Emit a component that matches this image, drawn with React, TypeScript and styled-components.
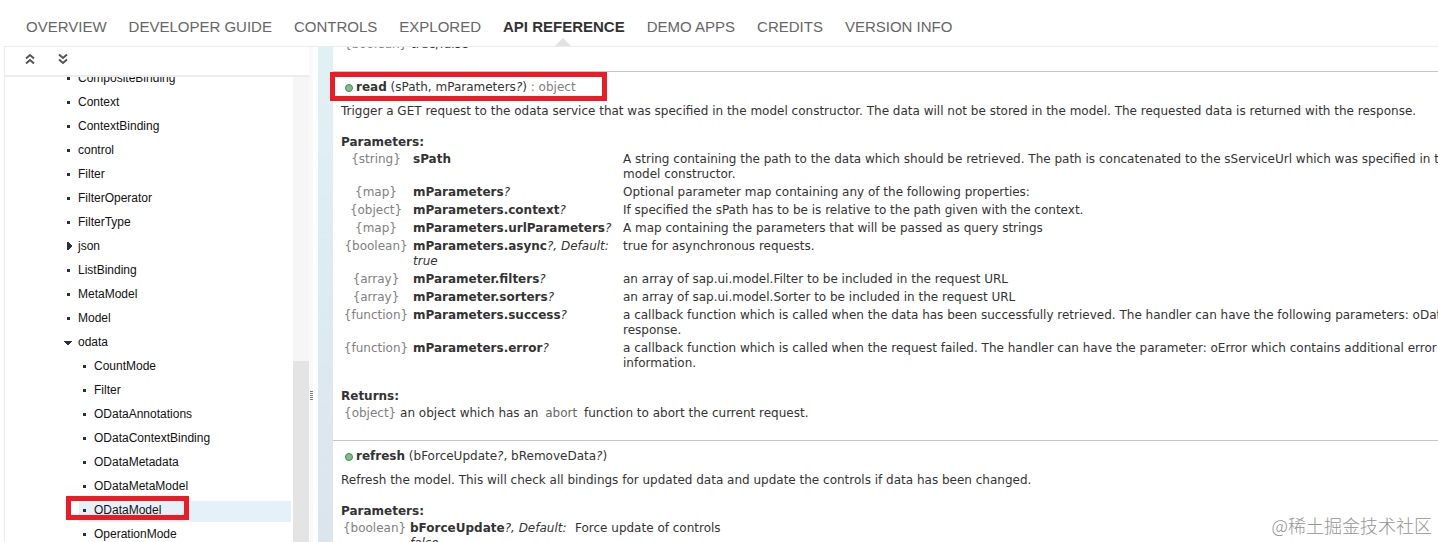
import React from 'react';
import styled, { createGlobalStyle } from 'styled-components';

const Global = createGlobalStyle`
  *, *::before, *::after { box-sizing: border-box; }
  body { margin: 0; background: #fff; }
`;

const ui = '"Liberation Sans", Arial, sans-serif';
const docFont = '"DejaVu Sans", Verdana, sans-serif';

const Shell = styled.div`
  position: relative;
  display: flex;
  flex-direction: column;
  height: 100vh;
  overflow: hidden;
  padding-left: 4px;
  font-family: ${ui};
`;

const TopNav = styled.nav`
  display: flex;
  gap: 22px;
  flex: none;
  padding: 7px 0 0 22px;
  border-bottom: 1px solid #ececec;
`;

const TopLink = styled.a<{ $active?: boolean }>`
  position: relative;
  font-size: 15px;
  line-height: 39px;
  white-space: nowrap;
  text-decoration: none;
  color: ${p => (p.$active ? '#333' : '#666')};
  font-weight: ${p => (p.$active ? 700 : 400)};
  &::after {
    content: '';
    display: ${p => (p.$active ? 'block' : 'none')};
    position: absolute;
    bottom: 0;
    left: calc(50% - 9px);
    border: 8px solid transparent;
    border-top-width: 0;
    border-bottom-color: #e2e2e2;
  }
`;

const Main = styled.div`
  display: flex;
  flex: 1;
  min-height: 0;
`;

const Sidebar = styled.aside`
  display: flex;
  flex-direction: column;
  flex: none;
  width: 305px;
  border-left: 1px solid #ececec;
`;

const Toolbar = styled.div`
  display: flex;
  flex: none;
  gap: 17px;
  height: 30px;
  padding: 3px 0 0 17px;
  border-bottom: 2px solid #ececec;
`;

const IconButton = styled.button`
  display: flex;
  align-items: center;
  justify-content: center;
  width: 16px;
  height: 18px;
  padding: 0;
  border: 0;
  background: none;
`;

const TreeArea = styled.div`
  display: flex;
  flex: 1;
  min-height: 0;
  overflow: hidden;
`;

const Tree = styled.ul`
  flex: 1;
  list-style: none;
  margin: -8px 2px 0 0;
  padding: 0 0 0 58px;
`;

const Branch = styled.ul`
  list-style: none;
  margin: 0;
  padding: 0 0 0 16px;
`;

const TreeLink = styled.a<{ $selected?: boolean }>`
  position: relative;
  display: flex;
  align-items: center;
  height: 21px;
  margin-bottom: 3px;
  padding-bottom: 3px;
  font-size: 12px;
  line-height: 18px;
  color: #111;
  text-decoration: none;
  background: ${p => (p.$selected ? '#e4f1f9' : 'none')};
`;

const Marker = styled.svg`
  flex: none;
  width: 15px;
  height: 18px;
  fill: #2c2c44;
`;

const Scrollbar = styled.div`
  display: flex;
  flex-direction: column;
  flex: none;
  width: 16px;
  background: #f6f6f6;
`;

const ScrollThumb = styled.div`
  flex: 1;
  margin-top: 284px;
  background: #e4e4e4;
`;

const Splitter = styled.div`
  display: flex;
  flex-direction: column;
  align-items: center;
  flex: none;
  width: 4px;
  margin-right: 5px;
  padding-top: 344px;
  background: #f9f9f9;
`;

const Grip = styled.div`
  width: 3px;
  height: 9px;
  background: repeating-linear-gradient(#777 0 1px, #fff 1px 2px);
`;

const DocPane = styled.main`
  flex: 1;
  min-width: 0;
  overflow: hidden;
  padding-left: 15px;
  background: linear-gradient(#e0f1f4, #dbe5ec) left / 15px 100% no-repeat;
  font: 12px/15px ${docFont};
  color: #333;
`;

const Method = styled.section`
  margin-right: -24px;
  padding: 0 0 0 8px;
  border-bottom: 1px solid #c6c6c6;
`;

const PreviousMethod = styled(Method)`
  margin-top: -12px;
  padding-bottom: 19px;
`;

const Signature = styled.h3`
  position: relative;
  display: flex;
  align-items: center;
  margin: 0;
  padding: 8px 0 0 4px;
  font-size: 12px;
  line-height: 15px;
  font-weight: 400;
  white-space: pre;
`;

const Dot = styled.span`
  width: 8px;
  height: 8px;
  margin-right: 3px;
  border: 1px solid #2f8f56;
  border-radius: 50%;
  background: #86bd86;
`;

const Description = styled.p`
  margin: 9px 0 16px;
`;

const Heading = styled.h4`
  margin: 0;
  font-size: 12px;
  line-height: 15px;
`;

const Params = styled.table<{ $type: number; $name: number }>`
  width: 100%;
  table-layout: fixed;
  border-collapse: collapse;
  margin-top: 1px;
  td {
    padding: 1px 0 2px;
    vertical-align: top;
  }
  td:nth-child(1) {
    width: ${p => p.$type}px;
    padding-right: 2px;
    text-align: center;
    white-space: nowrap;
    color: #808080;
  }
  td:nth-child(2) { width: ${p => p.$name}px; }
  td:nth-child(3) { padding-right: 4px; }
`;

const Returns = styled.div`
  margin-top: 16px;
  padding-bottom: 19px;
`;

const ReturnLine = styled.p`
  margin: 0;
  padding: 2px 0 0 3px;
`;

const Muted = styled.span`
  color: #808080;
`;

const Code = styled.code`
  font-family: inherit;
  color: #666;
  margin: 0 3px;
`;

const Highlight = styled.span<{ $kind: 'method' | 'tree' }>`
  position: absolute;
  pointer-events: none;
  border: 5px solid #ed1c24;
  ${p =>
    p.$kind === 'method'
      ? 'left: -11px; top: 0; width: 277px; height: 29px;'
      : 'left: -13px; top: -5px; width: 123px; height: 24px;'}
`;

const Watermark = styled.div`
  position: absolute;
  right: 6px;
  bottom: 5px;
  font: 300 18px/24px "Noto Sans CJK SC", sans-serif;
  color: #949494;
  text-shadow: 0 0 2px #fff;
`;

type Kind = 'leaf' | 'closed' | 'open';

function Node({ label, kind = 'leaf', selected }: { label: string; kind?: Kind; selected?: boolean }) {
  return (
    <TreeLink href="#" $selected={selected}>
      <Marker viewBox="0 0 15 18" aria-hidden="true" shapeRendering="crispEdges">
        {kind === 'leaf' && <rect x="4" y="8" width="3" height="3" />}
        {kind === 'closed' && <path d="M4 5h1l4 4-4 4H4z" />}
        {kind === 'open' && <path d="M1 8h8L6 12H4z" />}
      </Marker>
      {label}
      {selected && <Highlight $kind="tree" />}
    </TreeLink>
  );
}

function DoubleChevron({ down }: { down?: boolean }) {
  return (
    <svg width="10" height="12" viewBox="0 0 10 12" fill="none" stroke="#555" strokeWidth="2" aria-hidden="true">
      {down ? <path d="M1 1.5L5 5L9 1.5M1 6.5L5 10L9 6.5" /> : <path d="M1 5.5L5 2L9 5.5M1 10.5L5 7L9 10.5" />}
    </svg>
  );
}

interface Param {
  type: string;
  name: string;
  optional?: boolean;
  fallback?: string;
  text: string;
}

function ParamTable({ rows, type, name }: { rows: Param[]; type: number; name: number }) {
  return (
    <Params $type={type} $name={name}>
      <tbody>
        {rows.map(r => (
          <tr key={r.name}>
            <td>{`{${r.type}}`}</td>
            <td>
              <b>{r.name}</b>
              <i>
                {r.optional && '?'}
                {r.fallback && `, Default: ${r.fallback}`}
              </i>
            </td>
            <td>{r.text}</td>
          </tr>
        ))}
      </tbody>
    </Params>
  );
}

const sections = ['OVERVIEW', 'DEVELOPER GUIDE', 'CONTROLS', 'EXPLORED', 'API REFERENCE', 'DEMO APPS', 'CREDITS', 'VERSION INFO'];

const nodes: { label: string; kind?: Kind }[] = [
  { label: 'CompositeBinding' },
  { label: 'Context' },
  { label: 'ContextBinding' },
  { label: 'control' },
  { label: 'Filter' },
  { label: 'FilterOperator' },
  { label: 'FilterType' },
  { label: 'json', kind: 'closed' },
  { label: 'ListBinding' },
  { label: 'MetaModel' },
  { label: 'Model' },
];

const odata = ['CountMode', 'Filter', 'ODataAnnotations', 'ODataContextBinding', 'ODataMetadata', 'ODataMetaModel', 'ODataModel', 'OperationMode'];

const readParams: Param[] = [
  { type: 'string', name: 'sPath', text: 'A string containing the path to the data which should be retrieved. The path is concatenated to the sServiceUrl which was specified in the model constructor.' },
  { type: 'map', name: 'mParameters', optional: true, text: 'Optional parameter map containing any of the following properties:' },
  { type: 'object', name: 'mParameters.context', optional: true, text: 'If specified the sPath has to be is relative to the path given with the context.' },
  { type: 'map', name: 'mParameters.urlParameters', optional: true, text: 'A map containing the parameters that will be passed as query strings' },
  { type: 'boolean', name: 'mParameters.async', optional: true, fallback: 'true', text: 'true for asynchronous requests.' },
  { type: 'array', name: 'mParameter.filters', optional: true, text: 'an array of sap.ui.model.Filter to be included in the request URL' },
  { type: 'array', name: 'mParameter.sorters', optional: true, text: 'an array of sap.ui.model.Sorter to be included in the request URL' },
  { type: 'function', name: 'mParameters.success', optional: true, text: 'a callback function which is called when the data has been successfully retrieved. The handler can have the following parameters: oData response.' },
  { type: 'function', name: 'mParameters.error', optional: true, text: 'a callback function which is called when the request failed. The handler can have the parameter: oError which contains additional error information.' },
];

const refreshParams: Param[] = [
  { type: 'boolean', name: 'bForceUpdate', optional: true, fallback: 'false', text: 'Force update of controls' },
];

export default function App() {
  return (
    <Shell>
      <Global />
      <TopNav>
        {sections.map(s => (
          <TopLink key={s} href="#" $active={s === 'API REFERENCE'}>{s}</TopLink>
        ))}
      </TopNav>
      <Main>
        <Sidebar>
          <Toolbar>
            <IconButton aria-label="Collapse all"><DoubleChevron /></IconButton>
            <IconButton aria-label="Expand all"><DoubleChevron down /></IconButton>
          </Toolbar>
          <TreeArea>
            <Tree>
              {nodes.map(n => (
                <li key={n.label}><Node {...n} /></li>
              ))}
              <li>
                <Node label="odata" kind="open" />
                <Branch>
                  {odata.map(l => (
                    <li key={l}><Node label={l} selected={l === 'ODataModel'} /></li>
                  ))}
                </Branch>
              </li>
            </Tree>
            <Scrollbar><ScrollThumb /></Scrollbar>
          </TreeArea>
        </Sidebar>
        <Splitter><Grip /></Splitter>
        <DocPane>
          <PreviousMethod>
            <ReturnLine><Muted>{'{boolean}'}</Muted> true/false</ReturnLine>
          </PreviousMethod>
          <Method>
            <Signature>
              <Dot /><b>read</b> (sPath, mParameters<i>?</i>) <Muted>: object</Muted>
              <Highlight $kind="method" />
            </Signature>
            <Description>
              Trigger a GET request to the odata service that was specified in the model constructor. The data will not be stored in the model. The requested data is returned with the response.
            </Description>
            <Heading>Parameters:</Heading>
            <ParamTable rows={readParams} type={72} name={210} />
            <Returns>
              <Heading>Returns:</Heading>
              <ReturnLine>
                <Muted>{'{object}'}</Muted> an object which has an <Code>abort</Code> function to abort the current request.
              </ReturnLine>
            </Returns>
          </Method>
          <Method>
            <Signature>
              <Dot /><b>refresh</b> (bForceUpdate<i>?</i>, bRemoveData<i>?</i>)
            </Signature>
            <Description>
              Refresh the model. This will check all bindings for updated data and update the controls if data has been changed.
            </Description>
            <Heading>Parameters:</Heading>
            <ParamTable rows={refreshParams} type={69} name={165} />
          </Method>
        </DocPane>
      </Main>
      <Watermark>@稀土掘金技术社区</Watermark>
    </Shell>
  );
}
